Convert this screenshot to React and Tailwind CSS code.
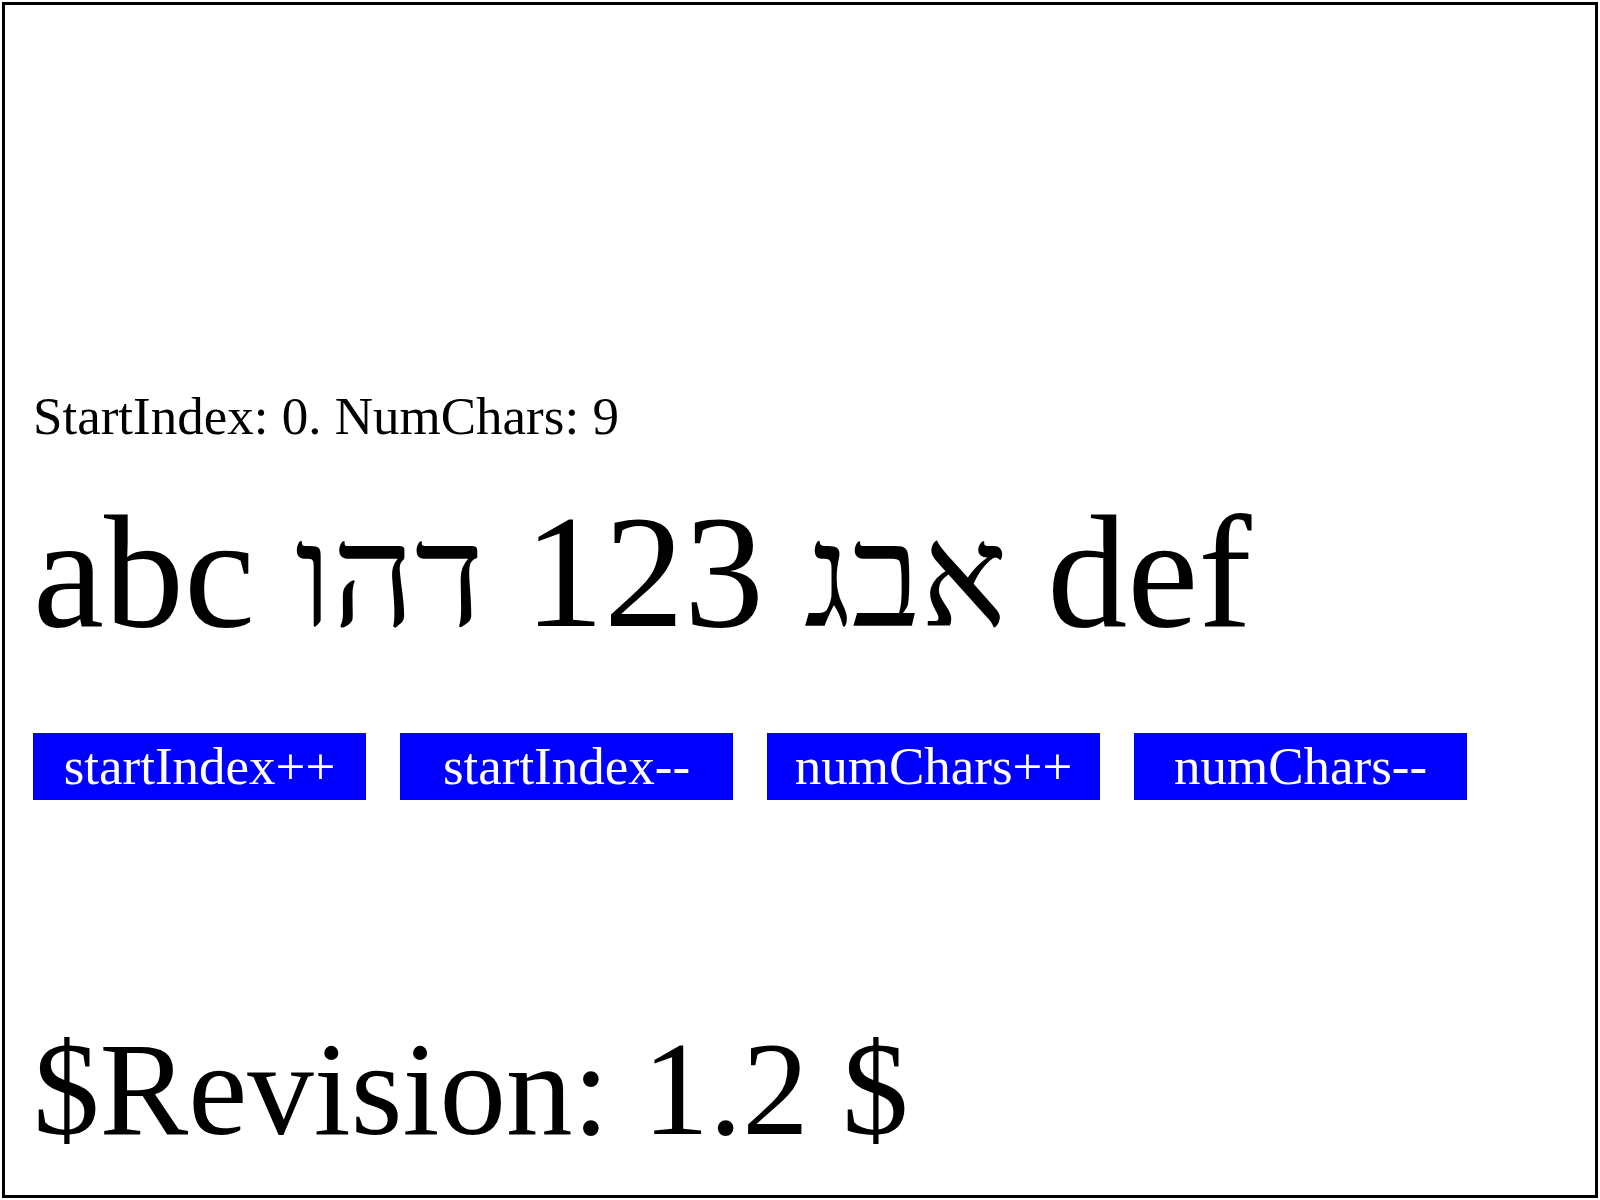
import React, { useState } from "react";

const actions = ["startIndex++", "startIndex--", "numChars++", "numChars--"];

export default function App() {
  const [start, setStart] = useState(0);
  const [count, setCount] = useState(9);
  const handlers = [
    () => setStart(start + 1),
    () => setStart(Math.max(0, start - 1)),
    () => setCount(count + 1),
    () => setCount(Math.max(0, count - 1)),
  ];

  return (
    <main className="flex min-h-screen flex-col bg-white p-[2px] font-['Liberation_Serif',serif] text-black">
      <div className="flex grow flex-col border-3 border-black px-7 pt-[383px]">
        <p className="text-[53px] leading-[56px]">
          StartIndex: {start}. NumChars: {count}
        </p>
        <p className="mt-11 whitespace-pre text-[160px] leading-[168px]">
          abc <span className="text-[144px] leading-none">אבג</span> 123{" "}
          <span className="text-[144px] leading-none">דהו</span> def
        </p>
        <div className="mt-[77px] flex gap-[34px]">
          {actions.map((label, i) => (
            <button
              key={label}
              type="button"
              onClick={handlers[i]}
              className="h-[67px] w-[333px] bg-[#0000ff] text-[53px] leading-[67px] text-white"
            >
              {label}
            </button>
          ))}
        </div>
        <p className="mt-[214px] text-[133px] leading-[150px]">$Revision: 1.2 $</p>
      </div>
    </main>
  );
}
